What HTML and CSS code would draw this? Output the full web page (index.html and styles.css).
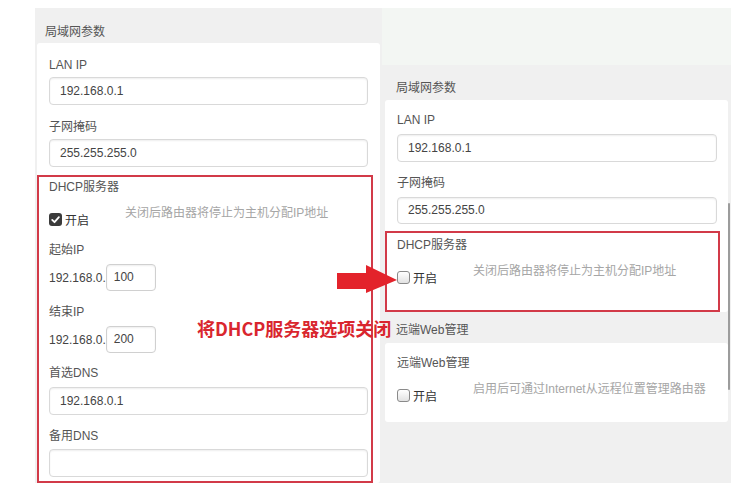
FILE: index.html
```html
<!DOCTYPE html>
<html lang="zh-CN">
<head>
<meta charset="utf-8">
<title>局域网参数</title>
<link rel="stylesheet" href="styles.css">
</head>
<body>
<div class="page">
  <section class="panel panel-left">
    <div class="panel-head">局域网参数</div>
    <div class="card card-left">
      <div class="field">
        <div class="label">LAN IP</div>
        <div class="input">192.168.0.1</div>
      </div>
      <div class="field field-next">
        <div class="label">子网掩码</div>
        <div class="input">255.255.255.0</div>
      </div>
      <div class="redbox redbox-left">
        <div class="label">DHCP服务器</div>
        <div class="check-row">
          <div class="check"><span class="box checked"><svg viewBox="0 0 13 13" width="13" height="13"><path d="M3.2 6.9 L5.5 9.2 L9.9 4.1" fill="none" stroke="#fff" stroke-width="1.8" stroke-linecap="round" stroke-linejoin="round"/></svg></span><span class="check-text">开启</span></div>
          <div class="hint">关闭后路由器将停止为主机分配IP地址</div>
        </div>
        <div class="label gap-8">起始IP</div>
        <div class="ip-row"><span class="ip-prefix">192.168.0.</span><span class="input input-small">100</span></div>
        <div class="label gap-11">结束IP</div>
        <div class="ip-row"><span class="ip-prefix">192.168.0.</span><span class="input input-small">200</span></div>
        <div class="label gap-10">首选DNS</div>
        <div class="input input-dns">192.168.0.1</div>
        <div class="label gap-11">备用DNS</div>
        <div class="input input-dns2"></div>
      </div>
    </div>
  </section>

  <section class="panel panel-right">
    <div class="panel-top"></div>
    <div class="panel-head panel-head-right">局域网参数</div>
    <div class="card card-right">
      <div class="field">
        <div class="label">LAN IP</div>
        <div class="input input-wide">192.168.0.1</div>
      </div>
      <div class="field field-next-r">
        <div class="label">子网掩码</div>
        <div class="input input-wide input-mask">255.255.255.0</div>
      </div>
      <div class="redbox redbox-right">
        <div class="label">DHCP服务器</div>
        <div class="check-row">
          <div class="check"><span class="box"></span><span class="check-text">开启</span></div>
          <div class="hint">关闭后路由器将停止为主机分配IP地址</div>
        </div>
      </div>
    </div>
    <div class="section-head">远端Web管理</div>
    <div class="card card-web">
      <div class="label">远端Web管理</div>
      <div class="check-row">
        <div class="check"><span class="box"></span><span class="check-text">开启</span></div>
        <div class="hint">启用后可通过Internet从远程位置管理路由器</div>
      </div>
    </div>
    <div class="scrollbar"></div>
  </section>

  <svg class="arrow" viewBox="0 0 61 30" width="61" height="30"><polygon points="0,9 29,9 29,1 60,16 29,29 29,25 0,25" fill="#e3232b"/></svg>
  <div class="note">将DHCP服务器选项关闭</div>
</div>
</body>
</html>
```

FILE: styles.css
```css
* { box-sizing: border-box; }

body {
  margin: 0;
  background: #fff;
  font-family: "Liberation Sans", "Noto Sans CJK SC", sans-serif;
  font-size: 12px;
  color: #555;
}

.page {
  position: relative;
  display: flex;
  align-items: flex-start;
  padding: 8px 0 0 35px;
  height: 500px;
}

.panel {
  background: #f0f0f0;
  height: 475px;
}

.panel-left {
  width: 347px;
  padding: 0 2px;
}

.panel-right {
  position: relative;
  width: 349px;
}

.panel-head {
  padding: 14px 0 1px 8px;
  line-height: 20px;
  height: 35px;
  color: #555;
}

.panel-top {
  height: 57px;
  background: #f3f6f3;
}

.panel-head-right {
  padding: 13px 0 2px 14px;
}

.card {
  background: #fff;
  border-radius: 3px;
}

.card-left {
  height: 440px;
  padding-top: 12px;
}

.card-left > .field {
  padding-left: 12px;
}

.field-next { margin-top: 12px; }

.label {
  height: 20px;
  line-height: 20px;
  color: #555;
  white-space: nowrap;
}

.input {
  margin-top: 2px;
  width: 319px;
  height: 28px;
  line-height: 26px;
  padding-left: 10px;
  border: 1px solid #d9d9d9;
  border-radius: 4px;
  background: #fff;
  color: #444;
  box-shadow: inset 0 1px 2px rgba(0, 0, 0, 0.07);
}

.redbox {
  border: 2px solid #d23a48;
}

.redbox-left {
  margin-top: 8px;
  margin-right: 7px;
  padding: 0 3px 4px 10px;
}

.check-row {
  display: flex;
  align-items: flex-start;
  margin-top: 9px;
  height: 26px;
}

.check {
  display: flex;
  align-items: center;
  width: 76px;
  height: 26px;
  flex: none;
}

.box {
  display: block;
  width: 13px;
  height: 13px;
  border: 1px solid #8a8a8a;
  border-radius: 3px;
  background: linear-gradient(#ffffff, #e2e2e2);
}

.box.checked {
  border: none;
  background: #3b3b3b;
}

.box.checked svg { display: block; }

.check-text {
  margin-left: 3px;
  color: #333;
}

.hint {
  line-height: 14px;
  color: #a6a6a6;
  white-space: nowrap;
}

.gap-8 { margin-top: 8px; }
.gap-10 { margin-top: 10px; }
.gap-11 { margin-top: 11px; }

.ip-row {
  display: flex;
  align-items: center;
  margin-top: 4px;
  height: 27px;
}

.ip-prefix {
  color: #444;
}

.input-small {
  margin-top: 0;
  width: 50px;
  height: 27px;
  padding-left: 7px;
  line-height: 25px;
  border-color: #d0d0d0;
}

.input-dns { margin-top: 4px; }
.input-dns2 { margin-top: 3px; }

/* right panel */
.card-right {
  margin: 0 3px;
  padding-top: 10px;
}

.card-right > .field {
  padding-left: 12px;
}

.input-wide {
  margin-top: 4px;
  width: 320px;
}

.field-next-r { margin-top: 11px; }

.input-mask {
  height: 27px;
  line-height: 25px;
}

.redbox-right {
  margin-top: 7px;
  margin-right: 8px;
  padding: 2px 0 20px 10px;
  height: 81px;
}

.section-head {
  height: 31px;
  padding: 8px 0 3px 14px;
  line-height: 20px;
  color: #555;
}

.card-web {
  margin: 0 3px;
  height: 79px;
  padding: 10px 0 0 12px;
}

.scrollbar {
  position: absolute;
  left: 346px;
  top: 195px;
  width: 2px;
  height: 187px;
  background: #9c9c9c;
  border-radius: 1px;
}

.arrow {
  position: absolute;
  left: 337px;
  top: 264px;
}

.note {
  position: absolute;
  left: 197px;
  top: 315px;
  font-family: "Noto Sans CJK SC", sans-serif;
  font-size: 18px;
  font-weight: 700;
  line-height: 26px;
  color: #d9262e;
  white-space: nowrap;
}
```
